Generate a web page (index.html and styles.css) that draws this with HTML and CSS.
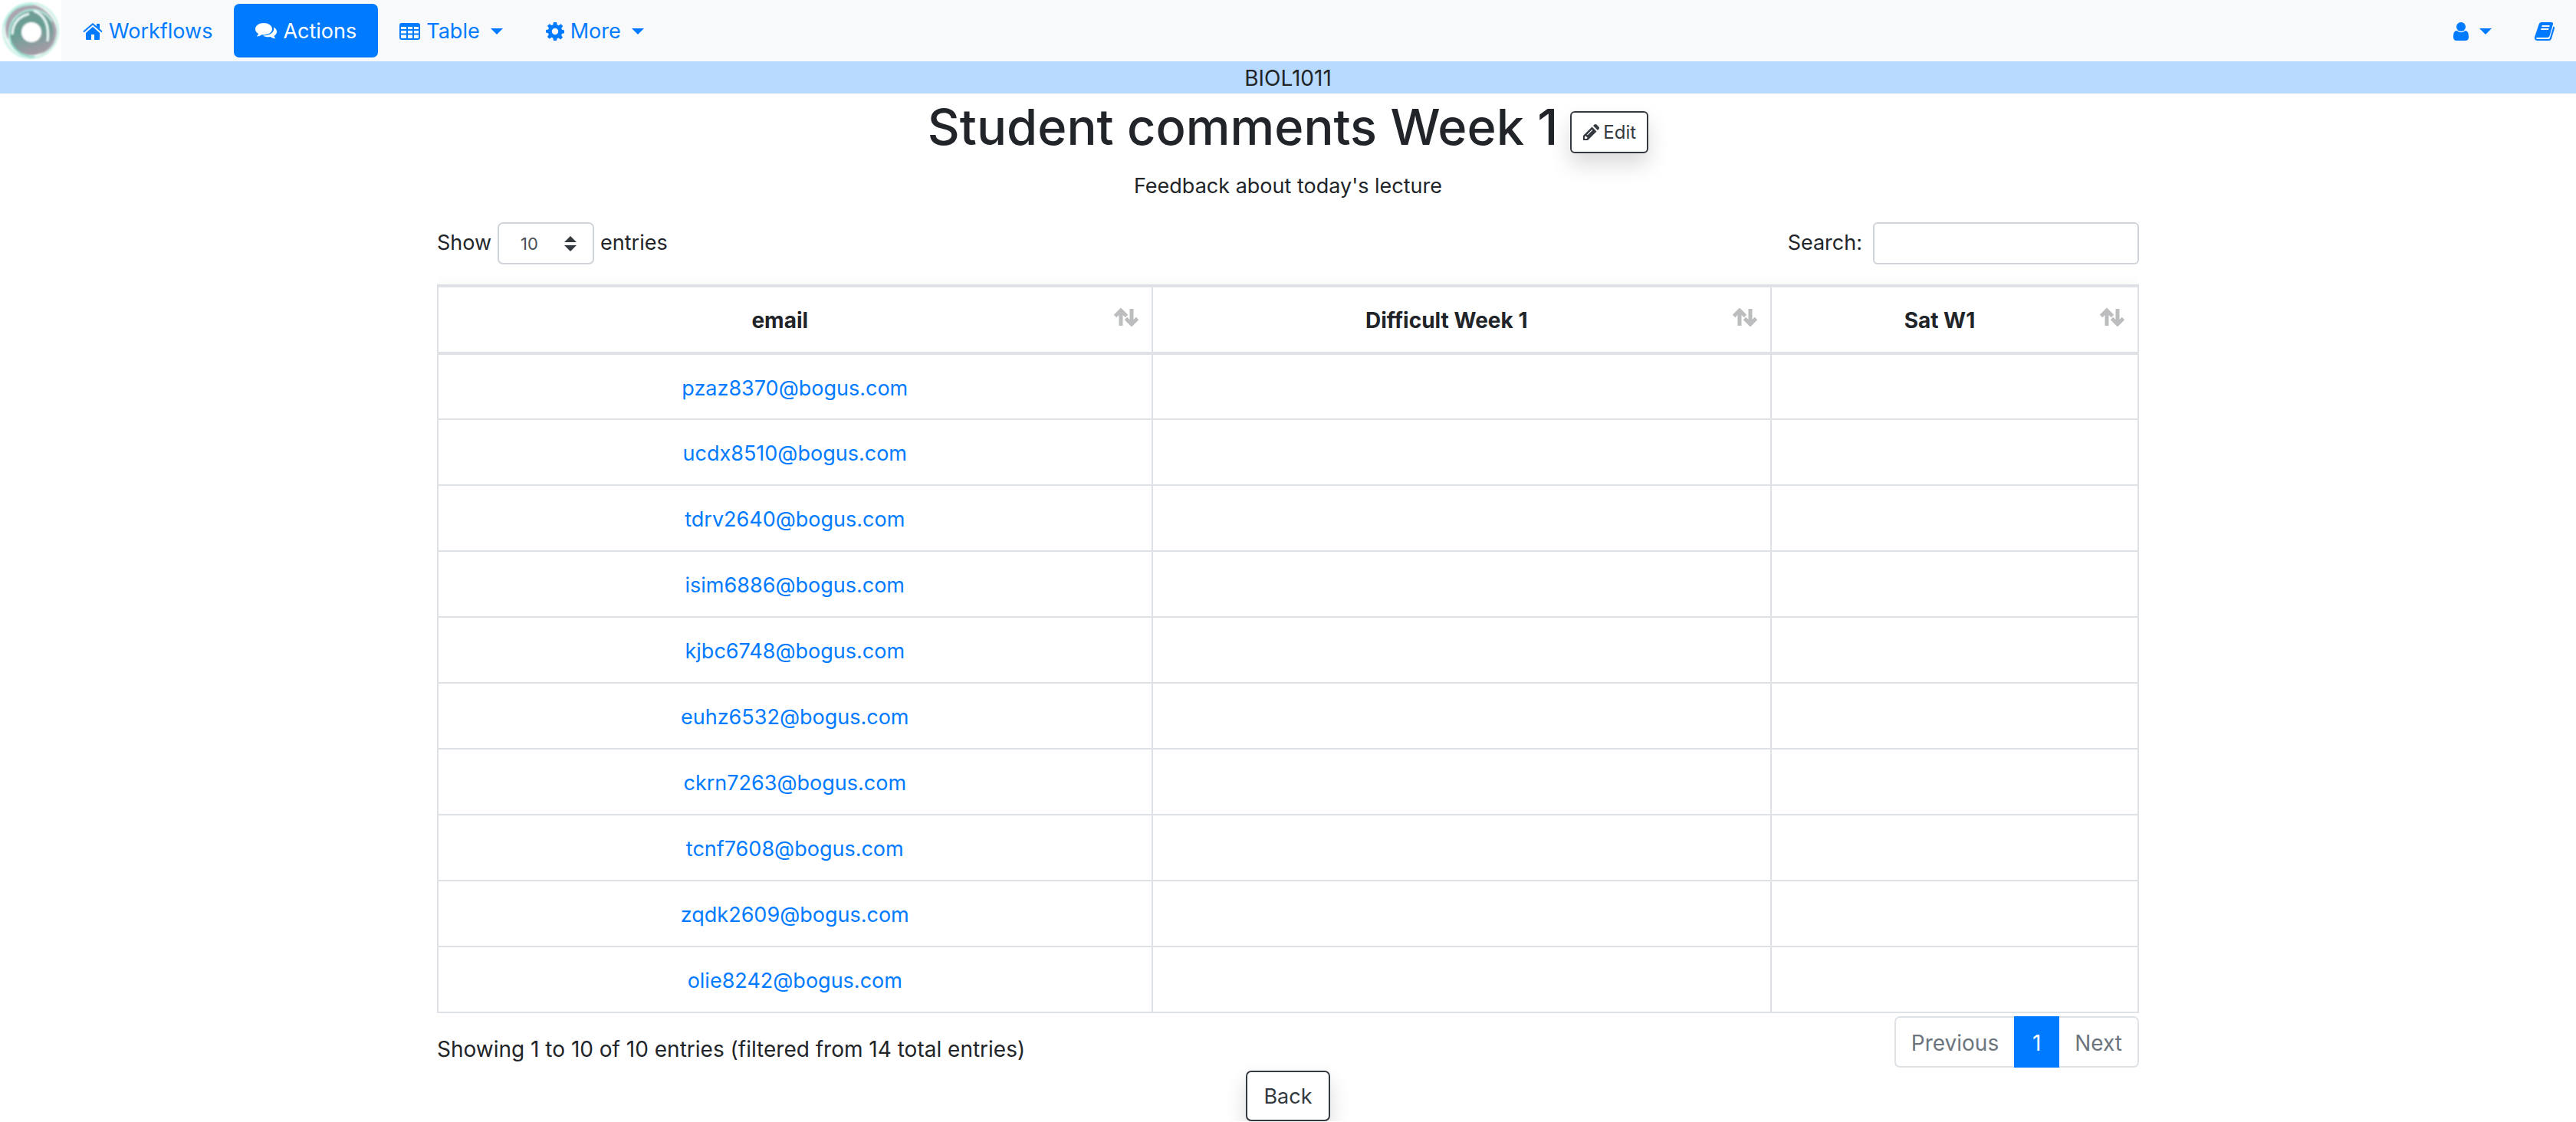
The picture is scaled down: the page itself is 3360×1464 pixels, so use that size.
FILE: index.html
```html
<!DOCTYPE html>
<html lang="en">
<head>
<meta charset="utf-8">
<title>Student comments Week 1</title>
<link rel="stylesheet" href="styles.css">
</head>
<body>
<nav class="navbar">
  <a class="brand" href="#" aria-label="Home">
    <svg viewBox="0 0 80 80" width="80" height="80">
      <defs>
        <linearGradient id="ring" x1="0" y1="0" x2="0.3" y2="1"><stop offset="0" stop-color="#6f9b95"/><stop offset="0.55" stop-color="#6ba096"/><stop offset="1" stop-color="#a09ba5"/></linearGradient>
        <filter id="soft"><feGaussianBlur stdDeviation="0.8"/></filter>
      </defs>
      <rect width="80" height="80" fill="#fff"/>
      <g filter="url(#soft)" fill="none">
        <circle cx="40" cy="40" r="36" fill="#edf8f5" stroke="#c4efe4" stroke-width="2"/>
        <path d="M11 52A31 31 0 0 1 60 15Q72 25 74 40Q73 64 52 71Q70 58 67 38Q63 20 44 14Q16 12 11 52Z" fill="#aaa5ae"/>
        <circle cx="41" cy="43" r="29" fill="url(#ring)"/>
        <path d="M5 34Q13 5 43 6M13 55Q8 24 34 14Q56 9 68 28M30 72Q8 60 13 37" stroke="#b2eee0" stroke-width="2"/>
        <path d="M16 45Q17 23 38 18M44 14Q66 22 62 54" stroke="#e7f9f5" stroke-width="3"/>
        <path d="M14 55Q25 75 45 74" stroke="#83d6c3" stroke-width="2"/>
        <circle cx="41" cy="42" r="13" fill="#fff"/>
      </g>
    </svg>
  </a>
  <a class="nav-link" href="#">
    <svg class="icon home" viewBox="0 0 26 22"><path d="M13 5 4 13v8q0 1 1 1h6v-7h4v7h6q1 0 1-1v-8Z"/><path d="M1 11.500 13 1.300 25 11.500" fill="none" stroke="currentColor" stroke-width="2"/><path d="M18 1h4v7l-4-3.500Z"/></svg>
    Workflows</a>
  <a class="nav-link active" href="#">
    <svg class="icon" viewBox="0 0 28 24"><path d="M11 1C5 1 0 4.500 0 9c0 2.600 1.600 4.600 4 6-.4 1.400-1 2.300-2.200 3.400 3 .1 5-.9 6.800-2.100C16 17.300 22 13.600 22 9c0-4.500-5-8-11-8Z"/><path d="M24 6.500c2.500 1.500 4 3.500 4 5.700 0 2.400-1.300 4.300-3.600 5.700.4 1.300 1 2.300 2 3.500-2.700 0-4.700-1-6.600-2.300-4 .6-7.600-.2-10-1.600C17.500 18 26 13.500 24 6.500Z"/></svg>
    Actions</a>
  <button class="nav-link" type="button">
    <svg class="icon grid" viewBox="0 0 27 24"><path fill-rule="evenodd" d="M3 1h21q3 0 3 3v16q0 3-3 3H3q-3 0-3-3V4q0-3 3-3ZM2 6v3h7V6Zm9 0v3h6V6Zm8 0v3h6V6ZM2 11v3.500h7V11Zm9 0v3.500h6V11Zm8 0v3.500h6V11ZM2 16.500V20q0 1 1 1h6v-4.500Zm9 0V21h6v-4.500Zm8 0V21h5q1 0 1-1v-3.500Z"/></svg>
    Table<span class="caret"></span></button>
  <button class="nav-link" type="button">
    <svg class="icon gear" viewBox="0 0 24 24"><path fill-rule="evenodd" d="M10 0h4l.7 3.300 2 .9L19.500 2.300l2.700 2.600-1.900 2.900.8 2 2.900.6v3.800l-3 .7-.8 2 1.800 2.800-2.700 2.700-2.900-1.900-1.800.8L14 24h-4l-.7-3.400-1.900-.8-2.800 1.900-2.700-2.700 1.900-2.800-.8-2-3-.6V10l3.100-.6.8-1.900L2 4.800l2.700-2.600 2.900 1.900 1.800-.8ZM12 7.800a4.200 4.200 0 1 0 0 8.400 4.200 4.200 0 0 0 0-8.400Z"/></svg>
    More<span class="caret"></span></button>
  <button class="nav-link end" type="button" aria-label="Account">
    <svg class="icon user" viewBox="0 0 20 24"><circle cx="10" cy="6" r="6"/><path d="M4.500 11C1 11 0 15 0 19.500 0 22.500 2 24 4 24h12c2 0 4-1.500 4-4.500C20 15 19 11 15.500 11Q10 15.500 4.500 11Z"/></svg><span class="caret"></span></button>
  <a class="nav-link" href="#" aria-label="Documentation">
    <svg class="icon book" viewBox="0 0 26 24"><path fill-rule="evenodd" d="M9 0h13q2.500 0 2 2.500L19.500 18q-.7 2-3 2H4q-2 0-2 1 0 1 2 1h14q1.500 0 2-1.500L24.500 5.500Q26.500 6 26 8L22 21.500Q21.200 24 18.500 24H4Q0 24 0 20.500q0-2 1-4L5.500 3Q6.500 0 9 0Zm.8 4-.5 2h10l.5-2Zm-1.200 4L8 10h10l.6-2Z"/></svg></a>
</nav>
<div class="banner">BIOL1011</div>
<main class="container">
  <header class="title">
    <h1>Student comments Week 1</h1>
    <button class="btn small" type="button"><svg class="pencil" viewBox="0 0 22 22"><path fill-rule="evenodd" d="M1 15 12.500 3.500l6 6L7 21H1Zm2 1.500V19h2.500l1.200-1.200-2.500-2.500ZM6 13.500l6.500-6.500.8.800L6.800 14.300ZM14 2l1.600-1.400q1.400-1.200 2.800 0l3 3q1.200 1.400 0 2.800L20 8Z"/></svg>Edit</button>
  </header>
  <p class="lead">Feedback about today's lecture</p>
  <div class="controls">
    <div class="control">
      <label for="length">Show</label>
      <select id="length" class="length"><option>10</option><option>25</option><option>50</option></select>
      <label for="length">entries</label>
    </div>
    <div class="control search">
      <label for="search">Search:</label>
      <input id="search" type="search">
    </div>
  </div>
  <table class="data">
    <colgroup><col class="c-email"><col class="c-diff"><col></colgroup>
    <thead>
      <tr>
        <th>email<svg class="sort" viewBox="0 0 32 24"><path d="M9 23V3M1.500 10.500 9 3l7.500 7.500M23 1v20M15.500 13.500 23 21l7.500-7.500"/></svg></th>
        <th>Difficult Week 1<svg class="sort" viewBox="0 0 32 24"><path d="M9 23V3M1.500 10.500 9 3l7.500 7.500M23 1v20M15.500 13.500 23 21l7.500-7.500"/></svg></th>
        <th>Sat W1<svg class="sort" viewBox="0 0 32 24"><path d="M9 23V3M1.500 10.500 9 3l7.500 7.500M23 1v20M15.500 13.500 23 21l7.500-7.500"/></svg></th>
      </tr>
    </thead>
    <tbody>
      <tr><td><a href="#">pzaz8370@bogus.com</a></td><td></td><td></td></tr>
      <tr><td><a href="#">ucdx8510@bogus.com</a></td><td></td><td></td></tr>
      <tr><td><a href="#">tdrv2640@bogus.com</a></td><td></td><td></td></tr>
      <tr><td><a href="#">isim6886@bogus.com</a></td><td></td><td></td></tr>
      <tr><td><a href="#">kjbc6748@bogus.com</a></td><td></td><td></td></tr>
      <tr><td><a href="#">euhz6532@bogus.com</a></td><td></td><td></td></tr>
      <tr><td><a href="#">ckrn7263@bogus.com</a></td><td></td><td></td></tr>
      <tr><td><a href="#">tcnf7608@bogus.com</a></td><td></td><td></td></tr>
      <tr><td><a href="#">zqdk2609@bogus.com</a></td><td></td><td></td></tr>
      <tr><td><a href="#">olie8242@bogus.com</a></td><td></td><td></td></tr>
    </tbody>
  </table>
  <div class="footer">
    <p class="info">Showing 1 to 10 of 10 entries (filtered from 14 total entries)</p>
    <div class="pagination">
      <button class="page" type="button">Previous</button>
      <button class="page current" type="button">1</button>
      <button class="page" type="button">Next</button>
    </div>
  </div>
  <div class="back"><button class="btn" type="button">Back</button></div>
</main>
</body>
</html>
```
FILE: styles.css
```css
* { box-sizing: border-box; }
body {
  margin: 0;
  background: #fff;
  color: #212529;
  font: 27px/42px Inter, "Liberation Sans", sans-serif;
}
a { color: #007bff; text-decoration: none; }
button, input, select { font: inherit; color: inherit; margin: 0; }
button { cursor: pointer; }

.navbar { display: flex; align-items: center; height: 80px; background: #f8f9fa; }
.brand, .brand svg { display: block; }
.nav-link {
  display: flex;
  align-items: center;
  gap: 8px;
  height: 70px;
  padding: 2px 28px 0;
  border: 0;
  border-radius: 7px;
  background: none;
  color: #007bff;
}
.nav-link.active { background: #007bff; color: #fff; }
.nav-link.end { margin-left: auto; }
.icon { width: 28px; height: 24px; fill: currentColor; }
.icon.grid { width: 27px; }
.icon.home { width: 26px; height: 22px; }
.icon.gear { width: 24px; }
.icon.user { width: 20px; }
.icon.book { width: 26px; }
.caret { margin-left: 6px; border: 8px solid transparent; border-top-color: currentColor; border-bottom: 0; }

.banner { height: 42px; padding-top: 2px; background: #b8daff; font-size: 28px; line-height: 40px; text-align: center; }

.container { width: 2220px; max-width: 100%; margin: 0 auto; }
.title { display: flex; justify-content: center; align-items: center; gap: 16px; height: 84px; margin-bottom: 16px; }
h1 { margin: 0; padding-top: 4px; font-size: 65px; font-weight: 500; line-height: 80px; }
.lead { margin: 0 0 26px; text-align: center; }

.btn {
  height: 66px;
  padding: 2px 21px 0;
  border: 2px solid #343a40;
  border-radius: 7px;
  background: #fff;
  color: #343a40;
  box-shadow: 0 14px 28px rgba(0, 0, 0, .15);
}
.btn.small { display: flex; align-items: center; gap: 5px; height: 55px; margin-top: 16px; padding: 2px 14px 0; border-radius: 6px; font-size: 24px; }
.pencil { width: 22px; height: 22px; fill: currentColor; }

.controls { display: flex; justify-content: space-between; margin-bottom: 26px; }
.control { display: flex; align-items: center; gap: 8px; }
.control label { padding-bottom: 2px; }
.search { gap: 14px; }
.length {
  appearance: none;
  width: 126px;
  height: 55px;
  padding: 0 28px;
  border: 2px solid #ced4da;
  border-radius: 7px;
  color: #495057;
  font-size: 22px;
  background: #fff url("data:image/svg+xml,%3Csvg xmlns='http://www.w3.org/2000/svg' viewBox='0 0 16 20'%3E%3Cpath fill='%23343a40' d='M0 8 8 0l8 8ZM0 12h16l-8 8Z'/%3E%3C/svg%3E") no-repeat right 21px center / 16px 20px;
}
.search input { width: 347px; height: 55px; padding: 0 14px; border: 2px solid #ced4da; border-radius: 6px; background: #fff; }

.data {
  width: 100%;
  table-layout: fixed;
  border-collapse: collapse;
  text-align: center;
  box-shadow: 0 14px 28px rgba(0, 0, 0, .15);
  clip-path: inset(-28px 0 0 0);
  background: #fff;
}
.c-email { width: 42%; }
.c-diff { width: 36.4%; }
.data th, .data td { height: 86px; padding: 4px 21px 0; border: 2px solid #dee2e6; }
.data th { position: relative; height: 88px; padding: 2px 60px 0 21px; border-top-width: 4px; border-bottom-width: 4px; font-size: 28px; font-weight: 700; }
.sort { position: absolute; right: 17px; top: 27px; width: 32px; height: 24px; fill: none; stroke: #bcbdbe; stroke-width: 5; }

.footer { display: flex; justify-content: space-between; align-items: flex-start; padding-top: 4px; margin-bottom: 4px; font-size: 28px; }
.info { margin: 22px 0 0; }
.pagination { display: flex; }
.page { height: 67px; padding: 2px 20px 0; border: 2px solid #dee2e6; background: #fff; color: #6c757d; }
.page:first-child { border-right: 0; border-radius: 7px 0 0 7px; }
.page:last-child { border-left: 0; border-radius: 0 7px 7px 0; }
.page.current { min-width: 59px; border-color: #007bff; background: #007bff; color: #fff; }
.back { display: flex; justify-content: center; }
```
